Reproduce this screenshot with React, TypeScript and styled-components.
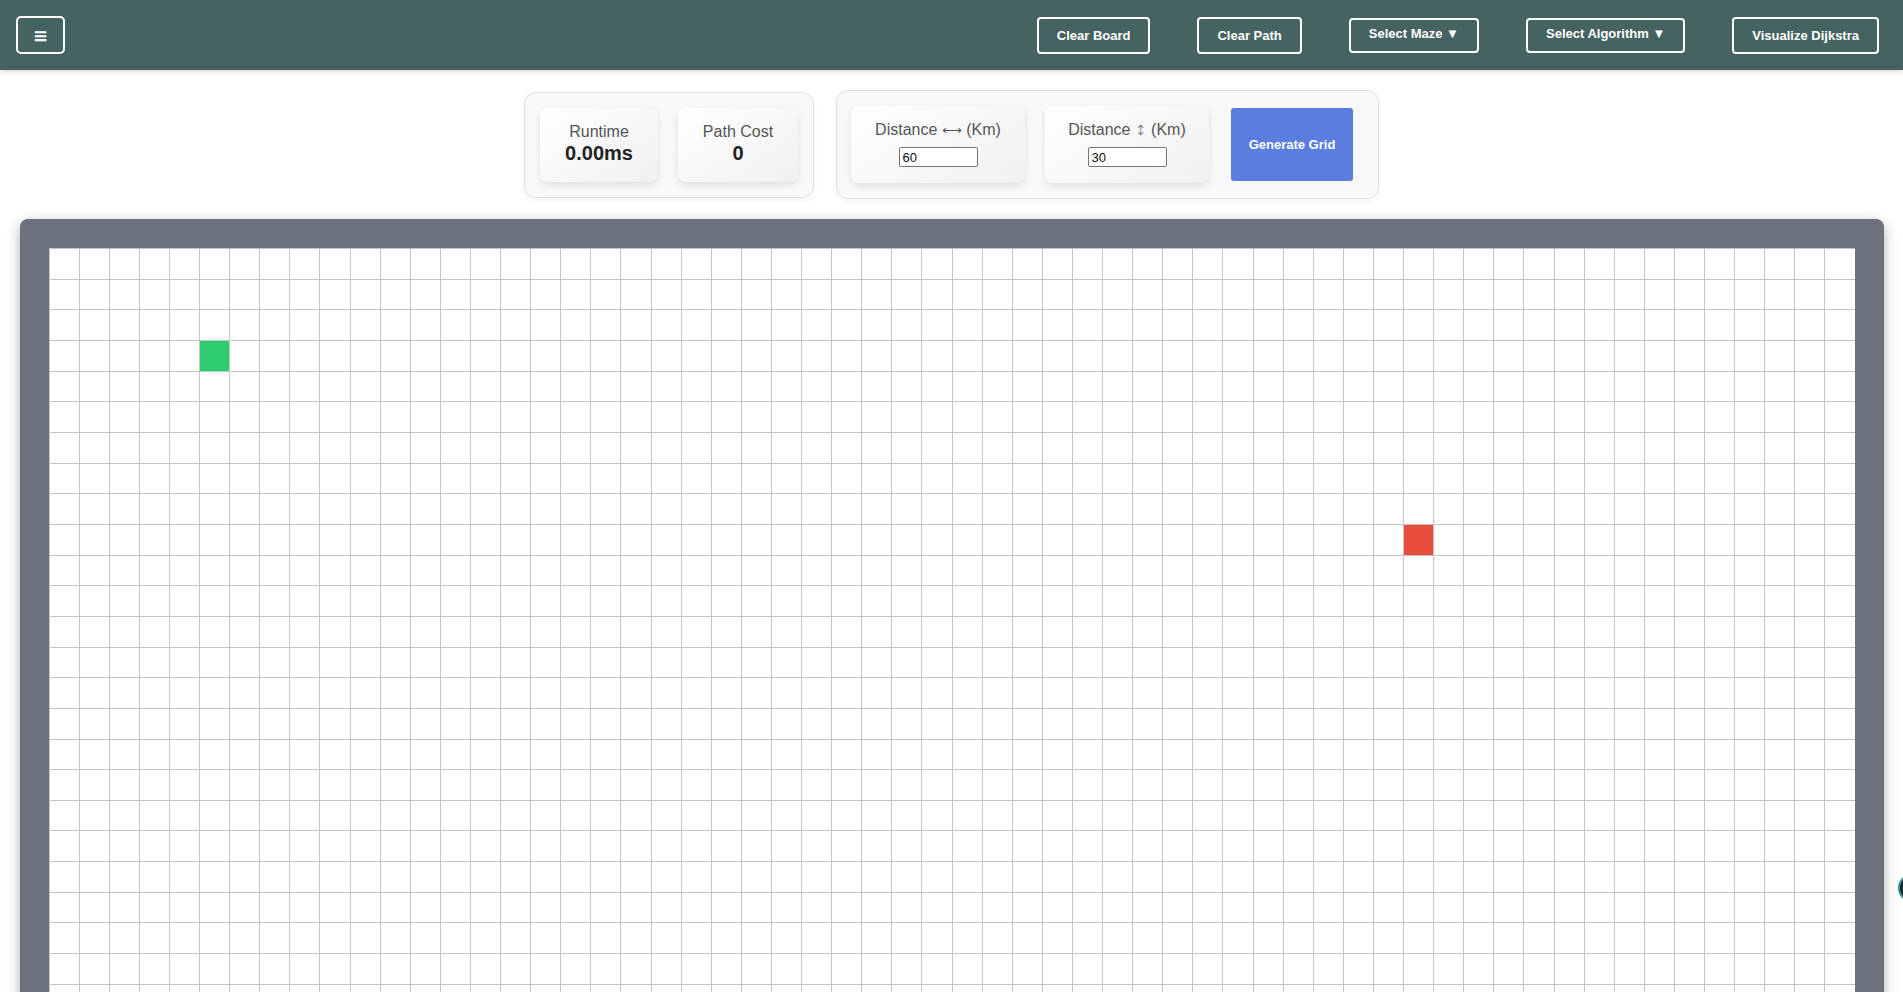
import React from "react";
import styled, { createGlobalStyle } from "styled-components";

const GlobalStyle = createGlobalStyle`
  html { scrollbar-width: none; }
  html::-webkit-scrollbar { display: none; }
  body {
    margin: 0;
    background: #ffffff;
    font-family: "Liberation Sans", Arial, "DejaVu Sans", sans-serif;
  }
  * { box-sizing: border-box; }
`;

const NavBar = styled.nav`
  height: 70px;
  background: #456461;
  display: flex;
  align-items: center;
  justify-content: space-between;
  padding: 0 24px 0 16px;
  box-shadow: 0 2px 4px rgba(0, 0, 0, 0.15);
`;

const MenuButton = styled.button`
  width: 49px;
  height: 38px;
  border: 2px solid #ffffff;
  border-radius: 5px;
  background: transparent;
  color: #ffffff;
  font-family: "DejaVu Sans", sans-serif;
  font-size: 18px;
  font-weight: bold;
  padding: 0;
  display: flex;
  align-items: center;
  justify-content: center;
`;

const NavGroup = styled.div`
  display: flex;
  align-items: center;
  gap: 47px;
`;

const NavButton = styled.button<{ $dropdown?: boolean }>`
  height: ${(p) => (p.$dropdown ? "35px" : "37px")};
  padding: ${(p) => (p.$dropdown ? "0 18px 3px" : "0 18px")};
  margin-left: ${(p) => (p.$dropdown ? "0" : "0")};
  border: 2px solid #ffffff;
  border-radius: 4px;
  background: transparent;
  color: #ffffff;
  font-family: "Liberation Sans", Arial, "DejaVu Sans", sans-serif;
  font-size: 13px;
  font-weight: bold;
  white-space: nowrap;
`;

const StatsRow = styled.section`
  display: flex;
  justify-content: center;
  align-items: center;
  gap: 22px;
  margin-top: 20px;
`;

const Panel = styled.div<{ $pad: string }>`
  display: flex;
  align-items: center;
  padding: ${(p) => p.$pad};
  background: #f8f8f8;
  border: 1px solid #e2e2e2;
  border-radius: 12px;
  box-shadow: 0 2px 6px rgba(0, 0, 0, 0.06);
`;

const Card = styled.div<{ $w: number; $h: number; $ml?: number; $top?: boolean }>`
  width: ${(p) => p.$w}px;
  height: ${(p) => p.$h}px;
  margin-left: ${(p) => p.$ml ?? 0}px;
  padding-top: ${(p) => (p.$top ? "14px" : "0")};
  padding-bottom: ${(p) => (p.$top ? "0" : "2px")};
  border-radius: 8px;
  background: linear-gradient(145deg, #ffffff, #f0f0f0);
  box-shadow: 0 3px 7px rgba(0, 0, 0, 0.1);
  display: flex;
  flex-direction: column;
  align-items: center;
  justify-content: ${(p) => (p.$top ? "flex-start" : "center")};
`;

const Label = styled.div`
  font-size: 16px;
  color: #555555;
  line-height: 19px;
  white-space: nowrap;
`;

const Arrow = styled.span`
  font-family: "DejaVu Sans", sans-serif;
  font-size: 14px;
  font-weight: 300;
`;

const Value = styled.div`
  font-size: 20px;
  font-weight: bold;
  color: #222222;
  line-height: 24px;
`;

const NumInput = styled.input`
  width: 79px;
  height: 20px;
  margin-top: 7px;
  border: 1px solid #767676;
  border-radius: 2px;
  font-family: "Liberation Sans", Arial, sans-serif;
  font-size: 13px;
  padding: 1px 3px;
  color: #111;
`;

const GenerateButton = styled.button`
  width: 122px;
  height: 73px;
  margin-left: 22px;
  border: none;
  border-radius: 3px;
  background: #5a7ddf;
  color: #ffffff;
  font-family: "Liberation Sans", Arial, sans-serif;
  font-size: 13px;
  font-weight: bold;
`;

const BoardFrame = styled.div`
  width: 1864px;
  margin: 20px auto 0;
  padding: 29px;
  background: #6b717d;
  border-radius: 8px;
  box-shadow: 0 4px 14px rgba(0, 0, 0, 0.3);
`;

const Board = styled.div`
  display: grid;
  grid-template-columns: repeat(60, 1fr);
  grid-template-rows: repeat(30, 30.67px);
  background: #ffffff;
`;

const Cell = styled.div<{ $kind?: "start" | "end" }>`
  border-top: 1px solid #c4c4c4;
  border-left: 1px solid #c4c4c4;
  background: ${(p) =>
    p.$kind === "start" ? "#2ecc71" : p.$kind === "end" ? "#e74c3c" : "#ffffff"};
`;

const FloatingDot = styled.div`
  position: fixed;
  left: 1898px;
  top: 874px;
  width: 28px;
  height: 28px;
  border-radius: 50%;
  background: #1d272d;
  border: 2px solid #3b8e98;
`;

const COLS = 60;
const ROWS = 30;

export default function App() {
  const cells = [];
  for (let r = 0; r < ROWS; r++) {
    for (let c = 0; c < COLS; c++) {
      const kind = r === 3 && c === 5 ? "start" : r === 9 && c === 45 ? "end" : undefined;
      cells.push(<Cell key={`${r}-${c}`} $kind={kind} />);
    }
  }
  return (
    <>
      <GlobalStyle />
      <NavBar>
        <MenuButton>≡</MenuButton>
        <NavGroup>
          <NavButton>Clear Board</NavButton>
          <NavButton>Clear Path</NavButton>
          <NavButton $dropdown>Select Maze ▼</NavButton>
          <NavButton $dropdown>Select Algorithm ▼</NavButton>
          <NavButton>Visualize Dijkstra</NavButton>
        </NavGroup>
      </NavBar>
      <StatsRow>
        <Panel $pad="15px 15px 15px 15px">
          <Card $w={118} $h={74}>
            <Label>Runtime</Label>
            <Value>0.00ms</Value>
          </Card>
          <Card $w={120} $h={74} $ml={20}>
            <Label>Path Cost</Label>
            <Value>0</Value>
          </Card>
        </Panel>
        <Panel $pad="15px 25px 15px 14px">
          <Card $w={174} $h={77} $top>
            <Label>
              Distance <Arrow>⟷</Arrow> (Km)
            </Label>
            <NumInput type="number" defaultValue={60} />
          </Card>
          <Card $w={164} $h={77} $ml={20} $top>
            <Label>
              Distance <Arrow>↕</Arrow> (Km)
            </Label>
            <NumInput type="number" defaultValue={30} />
          </Card>
          <GenerateButton>Generate Grid</GenerateButton>
        </Panel>
      </StatsRow>
      <BoardFrame>
        <Board>{cells}</Board>
      </BoardFrame>
      <FloatingDot />
    </>
  );
}
